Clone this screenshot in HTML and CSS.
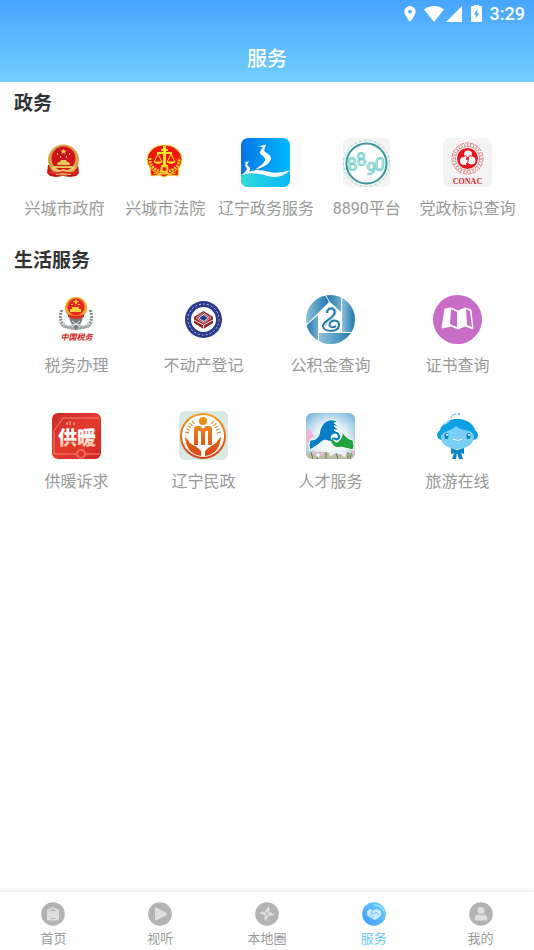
FILE: index.html
```html
<!DOCTYPE html>
<html lang="zh-CN">
<head>
    <meta charset="UTF-8">
    <meta name="viewport" content="width=device-width, initial-scale=1.0">
    <title>服务</title>
    <link rel="stylesheet" href="styles.css">
</head>
<body>
    <header class="header">
        <!-- 状态栏 -->
        <div class="status-bar">
            <svg width="12" height="16" viewBox="0 0 12 16"><path fill="#fff" fill-rule="evenodd" d="M6 0a5.6 5.6 0 0 0-5.6 5.6C.4 9.600 6 16 6 16s5.600-6.400 5.600-10.400A5.600 5.600 0 0 0 6 0zm0 3.700a1.900 1.900 0 1 1 0 3.800 1.900 1.900 0 0 1 0-3.800z"/></svg>
            <svg class="wifi" width="20" height="16" viewBox="0 0 20 16"><path fill="#fff" d="M0 3.500C6-1.200 14-1.200 20 3.500L10 16z"/></svg>
            <svg class="signal" width="16" height="16" viewBox="0 0 16 16"><path fill="#fff" d="M16 0v16H0z"/></svg>
            <svg class="battery" width="11" height="18" viewBox="0 0 11 18"><path fill="#fff" fill-rule="evenodd" d="M3 0h5v1h2q1 0 1 1v14q0 1-1 1H1q-1 0-1-1V2q0-1 1-1h2zM6.500 4L3 9.500h2L4.500 14 8 8H6z"/></svg>
            <span class="time">3:29</span>
        </div>
        <h1 class="page-title">服务</h1>
    </header>

    <main class="content">
        <section>
            <h2 class="section-title">政务</h2>
            <div class="services services-gov">
                <a href="#" class="service">
                    <svg class="service-icon" viewBox="0 0 49 49">
                        <path fill="#c8151b" d="M8 27l-1 8 3 3 6 1 7-1 7 1 6-1 3-3-1-8z"/>
                        <circle cx="23.500" cy="22" r="15.500" fill="#dba94c"/>
                        <circle cx="23.500" cy="22" r="14" fill="none" stroke="#c58c38" stroke-dasharray="1 1"/>
                        <circle cx="23.500" cy="20.500" r="12" fill="#d0121b"/>
                        <path fill="#edc65a" d="M23.500 11l1 1.500h2l-1.500 1.500.5 2-2-1-2 1 .5-2-1.500-1.500h2zM17 15h1v2h-1zm12 0h1v2h-1zm-9 3h1v2h-1zm6 0h1v2h-1zM20 24l1-2h5l1 2zM17 27l1-3h11l1 3zm-3 3v-2h19v2z"/>
                        <path fill="none" stroke="#efcb68" stroke-width="2" d="M12 29q5 6 11.500 3Q30 35 35 29M16 36q7-2 15 0"/>
                        <path fill="none" stroke="#e4302c" stroke-width="2" d="M9 34q8 2 14 0 6 2 14 0"/>
                    </svg>
                    <span>兴城市政府</span>
                </a>
                <a href="#" class="service">
                    <svg class="service-icon" viewBox="0 0 49 49">
                        <path fill="#ee1c16" stroke="#f8d02c" d="M9 28l1 10 8-1 5 2 5-2 9 1 1-10z"/>
                        <ellipse cx="23.500" cy="21.500" rx="17.500" ry="14.500" fill="#ee1713" stroke="#f4e02a"/>
                        <path fill="none" stroke="#f5cf26" stroke-width="3" stroke-dasharray="2 1" d="M9 20q-1 12 14.500 14Q39 32 38 20"/>
                        <path fill="none" stroke="#ffe82b" stroke-width="3" d="M23.500 8v20"/>
                        <path fill="none" stroke="#ffe82b" stroke-width="2" d="M20 12h7M16 15h15M20 28h7"/>
                        <path fill="none" stroke="#ffe82b" d="M17 16l-4 8h8zm13 0l-4 8h8z"/>
                        <path fill="#ffe82b" d="M13 24h8q-4 4-8 0m13 0h8q-4 4-8 0"/>
                        <circle cx="23.500" cy="31" r="3" fill="#ee1713" stroke="#f8d02c" stroke-width="2"/>
                        <path fill="none" stroke="#f8d02c" d="M13 35q6 3 10.500 0 5 3 11 0"/>
                    </svg>
                    <span>兴城市法院</span>
                </a>
                <a href="#" class="service">
                    <svg class="service-icon" viewBox="0 0 49 49">
                        <defs>
                            <linearGradient id="sky"><stop stop-color="#0674e8"/><stop offset="1" stop-color="#00baff"/></linearGradient>
                            <linearGradient id="sea"><stop stop-color="#2fdbdb"/><stop offset="1" stop-color="#07b9f5"/></linearGradient>
                            <clipPath id="tile"><rect width="49" height="49" rx="7"/></clipPath>
                        </defs>
                        <g clip-path="url(#tile)">
                            <path fill="url(#sky)" d="M0 0h49v49H0z"/>
                            <path fill="url(#sea)" d="M0 37q14-3 26 1 12 3 23-4v15H0z"/>
                            <path fill="#fff" d="M0 37c12-7 20-5 29-3 8 2 14 0 20-2-6 7-14 8-23 6-9-3-16-3-26-1z"/>
                            <path fill="#fff" d="M16 8q4 0 9-1.500-1 3-2 6c2 3 7 4 7 8-1 5-7 9-16 11 6-4 10-7 10-10 0-4-5-4-5-7 0-2 2-4 3-5-2-1-4-1-6-1.500zM3 24q3 0 5-1-1 2-2 4 4 2 3 5-2 4-8 5 4-4 5-6c0-2-2-2-2-4l1-2z"/>
                        </g>
                    </svg>
                    <span>辽宁政务服务</span>
                </a>
                <a href="#" class="service">
                    <svg class="service-icon" viewBox="0 0 49 49">
                        <rect x="1" width="47" height="49" rx="6" fill="#f3f3f3"/>
                        <circle cx="24.500" cy="25.500" r="23" fill="none" stroke="#9cd5d1" stroke-dasharray="3 2"/>
                        <circle cx="24.500" cy="25.500" r="20" fill="#fff" stroke="#36989a" stroke-width="2"/>
                        <g class="digits">
                            <text x="6" y="33" transform="rotate(-7 6 33)">8</text>
                            <text x="15" y="28" transform="rotate(-7 15 28)">8</text>
                            <text x="23" y="36" transform="rotate(10 23 36)">9</text>
                            <text x="32" y="32" transform="rotate(5 32 32)">0</text>
                        </g>
                    </svg>
                    <span>8890平台</span>
                </a>
                <a href="#" class="service">
                    <svg class="service-icon" viewBox="0 0 49 49">
                        <rect width="49" height="49" rx="7" fill="#f3f3f3"/>
                        <circle cx="24.500" cy="20.500" r="15.500" fill="none" stroke="#e0757c" stroke-dasharray="4 1"/>
                        <circle cx="24.500" cy="20.500" r="13.500" fill="none" stroke="#e0757c" stroke-width="2" stroke-dasharray="1 2"/>
                        <circle cx="24.500" cy="20.500" r="12" fill="none" stroke="#e0757c" stroke-dasharray="3 1"/>
                        <circle cx="24.500" cy="20.500" r="10.500" fill="#e5141d"/>
                        <circle cx="25" cy="16.500" r="4" fill="#fff"/>
                        <circle cx="21" cy="23" r="4" fill="#fff"/>
                        <circle cx="28.500" cy="22.500" r="4" fill="#fff"/>
                        <path fill="none" stroke="#e5141d" d="M20 18q4-1 5 3 1 4-2 5M29 18q-4-1-4 3"/>
                        <circle cx="24.500" cy="20.500" r="1.500" fill="#e5141d"/>
                        <text class="conac" x="24.500" y="46" text-anchor="middle">CONAC</text>
                    </svg>
                    <span>党政标识查询</span>
                </a>
            </div>
        </section>

        <section>
            <h2 class="section-title">生活服务</h2>
            <div class="services services-life">
                <a href="#" class="service">
                    <svg class="service-icon" viewBox="0 0 49 49">
                        <path fill="none" stroke="#858b8d" stroke-width="3" stroke-dasharray="2 1" d="M10 15q-5 11 5 17M38 15q5 11-5 17"/>
                        <path fill="#a5aaab" d="M7 27q10 6 17 2 8 4 17-2l-3 5q-8 3-14 3t-14-3z"/>
                        <path fill="#737b7e" d="M17 23h14l-3 7-4 5-4-5z"/>
                        <path fill="none" stroke="#e8eaea" d="M10 29q8 3 14 0 7 3 14 0M20 26l8 6M28 26l-8 6"/>
                        <circle cx="24" cy="13" r="11" fill="#eba72c"/>
                        <circle cx="24" cy="12" r="8.500" fill="#e72720"/>
                        <path fill="#f9cf3e" d="M24 4l1 2h2l-2 1.500v2l-1-1-1 1v-2l-2-1.500h2zM19 9h2v1h-2zm7 0h2v1h-2zm-6 3h7v2h2v3H18v-3h2z"/>
                        <path fill="#df2921" d="M16 19q8 4 16 0v3q-8 4-16 0z"/>
                        <text class="tax" x="24.500" y="45" text-anchor="middle">中国税务</text>
                    </svg>
                    <span>税务办理</span>
                </a>
                <a href="#" class="service">
                    <svg class="service-icon" viewBox="0 0 49 49">
                        <circle cx="24.500" cy="24.500" r="18.500" fill="#283b8c"/>
                        <circle cx="24.500" cy="24.500" r="15.500" fill="none" stroke="#bec5e0" stroke-dasharray="2 2"/>
                        <circle cx="24.500" cy="24.500" r="12.500" fill="#fff"/>
                        <path fill="#8c2630" d="M15 22l9.500-6 9.500 6v6l-9.500 6-9.500-6z"/>
                        <path fill="none" stroke="#f5dcdc" d="M15 25l9.500 5 9.500-5M24.500 30v4"/>
                        <path fill="none" stroke="#dba5a9" d="M17 23l7.500-5 7.500 5-7.500 5z"/>
                        <path fill="#fff" d="M19 23l5.500-4 5.500 4-5.500 4z"/>
                        <path fill="#283b8c" d="M20 23l4.500-3 4.500 3-4.500 3z"/>
                    </svg>
                    <span>不动产登记</span>
                </a>
                <a href="#" class="service">
                    <svg class="service-icon" viewBox="0 0 49 49">
                        <defs>
                            <linearGradient id="fund"><stop stop-color="#8fc0d9"/><stop offset="1" stop-color="#1976ad"/></linearGradient>
                            <linearGradient id="fund2" x1="1" x2="0"><stop stop-color="#73adcb"/><stop offset="1" stop-color="#1976ad"/></linearGradient>
                            <clipPath id="round"><circle cx="24.500" cy="24.500" r="24.500"/></clipPath>
                        </defs>
                        <g clip-path="url(#round)">
                            <path fill="#fff" d="M0 0h49v49H0z"/>
                            <path fill="url(#fund)" d="M0 0h19l4 7L2 28H0z"/>
                            <path fill="url(#fund2)" d="M20 0h15v17L24 7z"/>
                            <path fill="url(#fund)" d="M36 0h13v37H36z"/>
                            <path fill="url(#fund2)" d="M0 31l12-11v29H0z"/>
                            <path fill="url(#fund)" d="M13 38h36v11H13z"/>
                        </g>
                        <path fill="none" stroke="#227cae" stroke-width="2" d="M21 18c0-7 10-5 7 1-2 5-11 7-11 12 0 6 14 7 16 0 1-6-7-7-9-3-2 3 2 6 6 3"/>
                        <path fill="none" stroke="#64a6c9" d="M20 17c2-8 13-5 9 3-2 4-10 6-9 11"/>
                    </svg>
                    <span>公积金查询</span>
                </a>
                <a href="#" class="service">
                    <svg class="service-icon" viewBox="0 0 49 49">
                        <circle cx="24.500" cy="24.500" r="24.500" fill="#c76dc7"/>
                        <path fill="#fff" stroke="#fff" stroke-linejoin="round" d="M12 14l6-1 7 3 7-3 6 2 2 19-8-3-7 3-7-3-9 2z"/>
                        <path fill="#c76dc7" d="M18 14l6 3v15l-7-3zM33 14l4 2 2 16-5-2z"/>
                    </svg>
                    <span>证书查询</span>
                </a>
                <a href="#" class="service">
                    <svg class="service-icon" viewBox="0 0 49 49">
                        <defs>
                            <linearGradient id="heat" x2="1" y2="1"><stop stop-color="#cc2a26"/><stop offset=".5" stop-color="#e53a2e"/><stop offset="1" stop-color="#cf2722"/></linearGradient>
                            <linearGradient id="warm" x2="0" y2="1"><stop offset=".4" stop-color="#fff"/><stop offset="1" stop-color="#ff9d6e"/></linearGradient>
                        </defs>
                        <rect y="2" width="49" height="46" rx="6" fill="url(#heat)"/>
                        <path fill="none" stroke="#ee8a7b" d="M1 21L11 7h36M48 43H33M25 43H2V21"/>
                        <circle cx="29" cy="43" r="4" fill="none" stroke="#ed7061" stroke-width="2"/>
                        <path fill="none" stroke="#ffc8b8" d="M15 11v3M18 10v4M22 11v3"/>
                        <text class="heat-text" x="25" y="34" text-anchor="middle" fill="url(#warm)">供暖</text>
                    </svg>
                    <span>供暖诉求</span>
                </a>
                <a href="#" class="service">
                    <svg class="service-icon" viewBox="0 0 49 49">
                        <defs><linearGradient id="civil" x2="0" y2="49" gradientUnits="userSpaceOnUse"><stop stop-color="#f3a51e"/><stop offset="1" stop-color="#d83a13"/></linearGradient></defs>
                        <rect width="49" height="49" rx="6" fill="#d9e9e4"/>
                        <circle cx="24" cy="25" r="22" fill="#fff" stroke="url(#civil)" stroke-width="2"/>
                        <circle cx="24" cy="10" r="4" fill="url(#civil)"/>
                        <path fill="url(#civil)" d="M15 34V18q0-3 3-3h3l3 3 3-3h3q3 0 3 3v16h-4V20q-3-1-3 2v12h-4V22q0-3-3-2v14z"/>
                        <path fill="url(#civil)" d="M6 25l5 7 8 5 3 3v5Q7 43 6 25zm36 0l-5 7-8 5-3 3v5q15-2 16-20z"/>
                        <path fill="none" stroke="url(#civil)" stroke-width="4" stroke-dasharray="1 2" d="M8 22q2-8 8-12M40 22q-2-8-8-12"/>
                    </svg>
                    <span>辽宁民政</span>
                </a>
                <a href="#" class="service">
                    <svg class="service-icon" viewBox="0 0 49 49">
                        <defs>
                            <radialGradient id="talent" cy=".6" r=".7"><stop stop-color="#fff"/><stop offset=".5" stop-color="#e5f1f8"/><stop offset="1" stop-color="#78b6dc"/></radialGradient>
                            <clipPath id="photo"><rect y="2" width="49" height="46" rx="6"/></clipPath>
                        </defs>
                        <g clip-path="url(#photo)">
                            <path fill="url(#talent)" d="M0 0h49v49H0z"/>
                            <path fill="#b9c1a0" d="M0 43q13-4 24-1t25-1v10H0z"/>
                            <path stroke="#65774a" d="M5 41l2 7M12 43l-1 5M20 41v7M30 42l2 6M42 41v7M46 40l-2 8"/>
                            <g fill="#f0b4d6">
                                <circle cx="3" cy="22" r="3"/><circle cx="6" cy="25" r="2"/><circle cx="2" cy="28" r="3"/>
                                <circle cx="8" cy="42" r="2"/><circle cx="16" cy="43" r="2"/><circle cx="47" cy="41" r="2"/>
                            </g>
                            <g fill="#faeaf3"><circle cx="12" cy="44" r="2"/><circle cx="25" cy="43" r="2"/><circle cx="38" cy="44" r="2"/></g>
                        </g>
                        <path fill="#087fc4" stroke="#fff" d="M4 29C12 29 13 25 14 19 18 8 26 7 32 11l-4 1 5 3-5 0 5 4-5 0 6 4c-7-2-11 2-10 8-5-3-7-2-11 2l-9 6q-2-4 0-10z"/>
                        <path fill="#22a13e" stroke="#fff" d="M47 29q-7-1-11-9 1 8-5 11c-4 0-4-4-1-5-4-1-7 3-4 7 3 4 6 4 9 3l12 3q2-4 0-10z"/>
                        <path fill="none" stroke="#087fc4" stroke-width="2" d="M25 30c-4-6 3-11 7-7 3 4-1 7-4 4"/>
                    </svg>
                    <span>人才服务</span>
                </a>
                <a href="#" class="service">
                    <svg class="service-icon" viewBox="0 0 49 49">
                        <path fill="none" stroke="#69bde2" d="M18 8q-1-4 5-5"/>
                        <circle cx="26" cy="3" r="1" fill="#36aee0"/>
                        <circle cx="9" cy="24" r="5" fill="#0c9ee0"/><circle cx="40" cy="24" r="5" fill="#0c9ee0"/>
                        <path fill="#0ba0e2" d="M7 27C4 16 13 8 24.500 8S45 16 42 27l-3 2H10z"/>
                        <path fill="#78cef7" d="M8 25c2-5 8-4 15-10 4 5 17 3 18 10 0 8-7 13-16.500 13S7 33 8 25z"/>
                        <ellipse cx="13.500" cy="25" rx="2" ry="3" fill="#087bc2"/><ellipse cx="35.500" cy="25" rx="2" ry="3" fill="#087bc2"/>
                        <circle cx="14" cy="24" r="1" fill="#fff"/><circle cx="36" cy="24" r="1" fill="#fff"/>
                        <path fill="none" stroke="#fff" d="M20 28q5 3 9 0"/>
                        <path fill="#fff" opacity=".8" d="M10 14q4-4 7-4l-4 3z"/>
                        <path fill="#0887c8" d="M18 37l6 2 7-2v6l-3-1 2 6h-4l-2-6-1 6h-4l2-6-3 1z"/>
                    </svg>
                    <span>旅游在线</span>
                </a>
            </div>
        </section>
    </main>

    <!-- 底部导航 -->
    <nav class="tab-bar">
        <a href="#" class="tab">
            <svg width="24" height="24" viewBox="0 0 24 24"><circle cx="12" cy="12" r="11.800" fill="#b3b3b3"/><path fill="#dedede" d="M6 8l6-3 6 3v9q0 1.500-1.500 1.500h-9Q6 18.500 6 17z"/><path fill="#b3b3b3" d="M8 9l4-2 4 2zm1.500 7h5v1h-5z"/></svg>
            <span>首页</span>
        </a>
        <a href="#" class="tab">
            <svg width="24" height="24" viewBox="0 0 24 24"><circle cx="12" cy="12" r="11.800" fill="#b3b3b3"/><path fill="#dedede" stroke="#dedede" stroke-width="2" stroke-linejoin="round" d="M8 6.500v11L18 12z"/></svg>
            <span>视听</span>
        </a>
        <a href="#" class="tab">
            <svg width="24" height="24" viewBox="0 0 24 24"><circle cx="12" cy="12" r="11.800" fill="#b3b3b3"/><path fill="#dedede" d="M14 4l1 6 5 3-6 1-4 5-1-6-5-2 6-2z"/><path stroke="#b3b3b3" d="M9 9l6 6M15 9l-6 6"/></svg>
            <span>本地圈</span>
        </a>
        <a href="#" class="tab active">
            <svg width="24" height="24" viewBox="0 0 24 24">
                <defs><linearGradient id="on" x1="0" y1="1" x2="1" y2="0"><stop stop-color="#4099ff"/><stop offset="1" stop-color="#6bd0ff"/></linearGradient></defs>
                <circle cx="12" cy="12" r="11.800" fill="url(#on)"/>
                <path fill="none" stroke="#d9f2ff" d="M12 3q7 0 10 6"/>
                <path fill="#cce9ff" d="M5 9l3-2 3 1 4-1 4 2v5l-6 4-2-1-2-1-3-2-1-1z"/>
                <path fill="none" stroke="#79bfff" d="M11 8l-2 3 3 1 2-2 4 4M8 14l2-1M10 16l2-2"/>
            </svg>
            <span>服务</span>
        </a>
        <a href="#" class="tab">
            <svg width="24" height="24" viewBox="0 0 24 24"><circle cx="12" cy="12" r="11.800" fill="#b3b3b3"/><circle cx="12" cy="8.500" r="3.500" fill="#dedede"/><path fill="#dedede" d="M5.500 17q0-4 4-4.500 2.500 1 5 0 4 .5 4 4.500 0 1.500-1.500 1.500H7q-1.500 0-1.500-1.500z"/></svg>
            <span>我的</span>
        </a>
    </nav>
</body>
</html>
```

FILE: styles.css
```css
* {
    margin: 0;
    padding: 0;
    box-sizing: border-box;
}

body {
    display: flex;
    flex-direction: column;
    min-height: 100vh;
    background: #fff;
    color: #333;
    font-family: Roboto, 'Noto Sans CJK SC', sans-serif;
}

a {
    color: inherit;
    text-decoration: none;
}

svg {
    display: block;
}

/* 顶部 */
.header {
    background: linear-gradient(#47a4ff, #72d0ff);
    color: #fff;
}

.status-bar {
    display: flex;
    align-items: center;
    justify-content: flex-end;
    height: 28px;
    padding-right: 9px;
}

.wifi {
    margin-left: 8px;
}

.signal {
    margin-left: 2px;
}

.battery {
    margin: 0 8px 0 9px;
}

.time {
    font-size: 18px;
    font-weight: 500;
    line-height: 28px;
}

.page-title {
    padding: 11px 0 3px;
    font-size: 20px;
    font-weight: 500;
    line-height: 40px;
    text-align: center;
}

/* 服务列表 */
.content {
    flex: 1;
}

.section-title {
    padding: 4px 14px 0;
    font-size: 19px;
    font-weight: 600;
    line-height: 36px;
}

.services {
    display: grid;
    row-gap: 34px;
    padding: 16px 13px 19px;
}

.services-gov {
    grid-template-columns: repeat(5, 1fr);
    padding-left: 14px;
    padding-right: 16px;
}

.services-life {
    grid-template-columns: repeat(4, 1fr);
}

.service {
    display: flex;
    flex-direction: column;
    align-items: center;
    gap: 11px;
    color: #999;
    font-size: 16px;
    line-height: 22px;
    white-space: nowrap;
}

.service-icon {
    width: 49px;
    height: 49px;
}

/* 图标中的文字 */
.digits {
    font-size: 18px;
    fill: #e9fbfa;
    stroke: #7dcfcc;
}

.conac {
    font-family: 'Liberation Serif', serif;
    font-size: 8px;
    font-weight: 700;
    fill: #dd2029;
}

.tax {
    font-size: 8px;
    font-style: italic;
    font-weight: 700;
    fill: #d82222;
}

.heat-text {
    font-size: 19px;
    font-weight: 900;
}

/* 底部导航 */
.tab-bar {
    display: flex;
    height: 59px;
    background: #fff;
    border-top: 1px solid #f0f0f0;
    box-shadow: 0 -1px 4px rgba(0, 0, 0, 0.08);
}

.tab {
    flex: 1;
    display: flex;
    flex-direction: column;
    align-items: center;
    gap: 3px;
    padding-top: 10px;
    color: #999;
    font-size: 13px;
    line-height: 20px;
}

.tab.active {
    color: #69c8ff;
}
```
